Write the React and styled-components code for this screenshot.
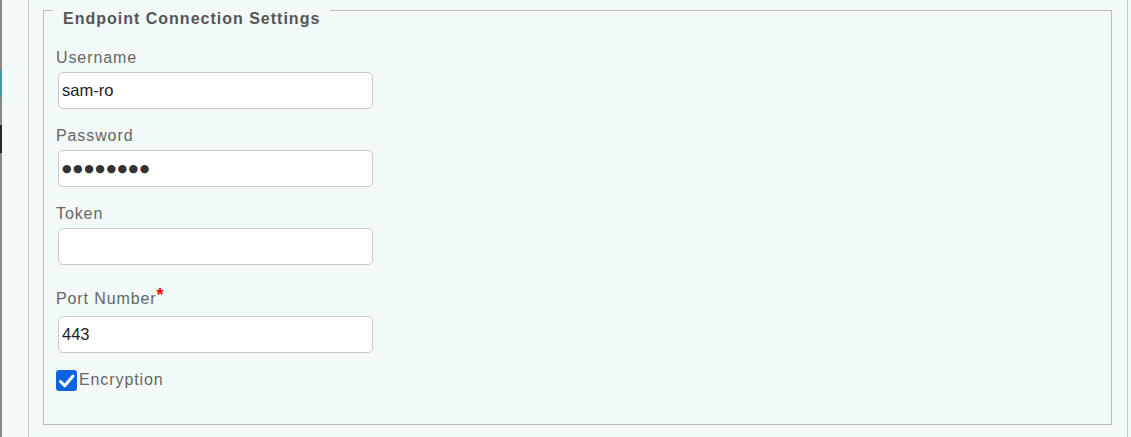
import React from "react";
import styled, { createGlobalStyle } from "styled-components";

const GlobalStyle = createGlobalStyle`
  html, body {
    margin: 0;
    background: #f2f9f9;
  }
  body {
    font-family: "Liberation Sans", Arial, sans-serif;
  }
`;

const Page = styled.div`
  display: flex;
  height: 437px;
  overflow: hidden;
`;

const Edge = styled.div`
  width: 2px;
  display: flex;
  flex-direction: column;
`;

const EdgePiece = styled.div`
  height: ${(p) => (p.$h ? `${p.$h}px` : "auto")};
  flex: ${(p) => (p.$h ? "none" : 1)};
  background: ${(p) => p.$color};
`;

const Panel = styled.div`
  box-sizing: border-box;
  width: 1100px;
  margin-left: 26px;
  padding: 9px 15px 0 14px;
  border-left: 1px solid #c7c7c7;
  border-right: 1px solid #c7c7c7;
`;

const Fieldset = styled.fieldset`
  margin: 0;
  padding: 0 0 33px 9px;
  border: 1px solid #bcbcbc;
  min-width: 0;
`;

const Legend = styled.legend`
  height: 2px;
  padding: 1px 10px 0;
  line-height: 18px;
  font-size: 16px;
  font-weight: bold;
  letter-spacing: 1px;
  color: #555;
`;

const Form = styled.div`
  display: flex;
  flex-direction: column;
  padding: 37px 0 0 3px;
`;

const Field = styled.div`
  display: flex;
  flex-direction: column;
  gap: ${(p) => (p.$required ? 8 : 4.5)}px;
  margin-bottom: 18.5px;
`;

const Label = styled.label`
  font-size: 16px;
  line-height: 18px;
  letter-spacing: 0.9px;
  color: #666;
  padding-top: ${(p) => (p.$required ? 7 : 0)}px;
`;

const Star = styled.span`
  color: #f00;
  font-size: 18px;
  font-weight: bold;
  vertical-align: 3px;
  line-height: 0;
  letter-spacing: 0;
`;

const Input = styled.input`
  box-sizing: border-box;
  width: 315px;
  height: 37px;
  margin: 0 0 0 2px;
  padding: 0 3px;
  border: 1px solid #c9c9c9;
  border-radius: 5px;
  background: #fff;
  font-family: "Liberation Sans", Arial, sans-serif;
  font-size: 16.5px;
  color: #222;
  outline: none;
`;

const Dots = styled(Input)`
  font-family: "DejaVu Sans", sans-serif;
  font-size: 11px;
  letter-spacing: 1.5px;
  color: #333;
`;

const CheckRow = styled.label`
  display: flex;
  align-items: center;
  gap: 2px;
  margin-top: -2px;
  font-size: 16px;
  line-height: 18px;
  letter-spacing: 0.9px;
  color: #666;
`;

const Box = styled.span`
  width: 21px;
  height: 21px;
  border-radius: 3px;
  background: #0b65e3;
  display: flex;
  align-items: center;
  justify-content: center;
`;

function TextField({ label, value, required, password }) {
  const Control = password ? Dots : Input;
  return (
    <Field $required={required}>
      <Label $required={required}>
        {label}
        {required && <Star>*</Star>}
      </Label>
      <Control type="text" value={value} readOnly />
    </Field>
  );
}

export default function App() {
  return (
    <>
      <GlobalStyle />
      <Page>
        <Edge>
          <EdgePiece $h={70} $color="#8a8a8a" />
          <EdgePiece $h={27} $color="#4f8fa8" />
          <EdgePiece $h={28} $color="#8a8a8a" />
          <EdgePiece $h={28} $color="#2a2a2a" />
          <EdgePiece $color="#8a8a8a" />
        </Edge>
        <Panel>
          <Fieldset>
            <Legend>Endpoint Connection Settings</Legend>
            <Form>
              <TextField label="Username" value="sam-ro" />
              <TextField label="Password" value="●●●●●●●●" password />
              <TextField label="Token" value="" />
              <TextField label="Port Number" value="443" required />
              <CheckRow>
                <Box>
                  <svg width="21" height="21" viewBox="0 0 21 21">
                    <path
                      d="M4.5 11.5 L8.8 15.8 L17 6"
                      fill="none"
                      stroke="#fff"
                      strokeWidth="3"
                      strokeLinecap="round"
                      strokeLinejoin="round"
                    />
                  </svg>
                </Box>
                Encryption
              </CheckRow>
            </Form>
          </Fieldset>
        </Panel>
      </Page>
    </>
  );
}
